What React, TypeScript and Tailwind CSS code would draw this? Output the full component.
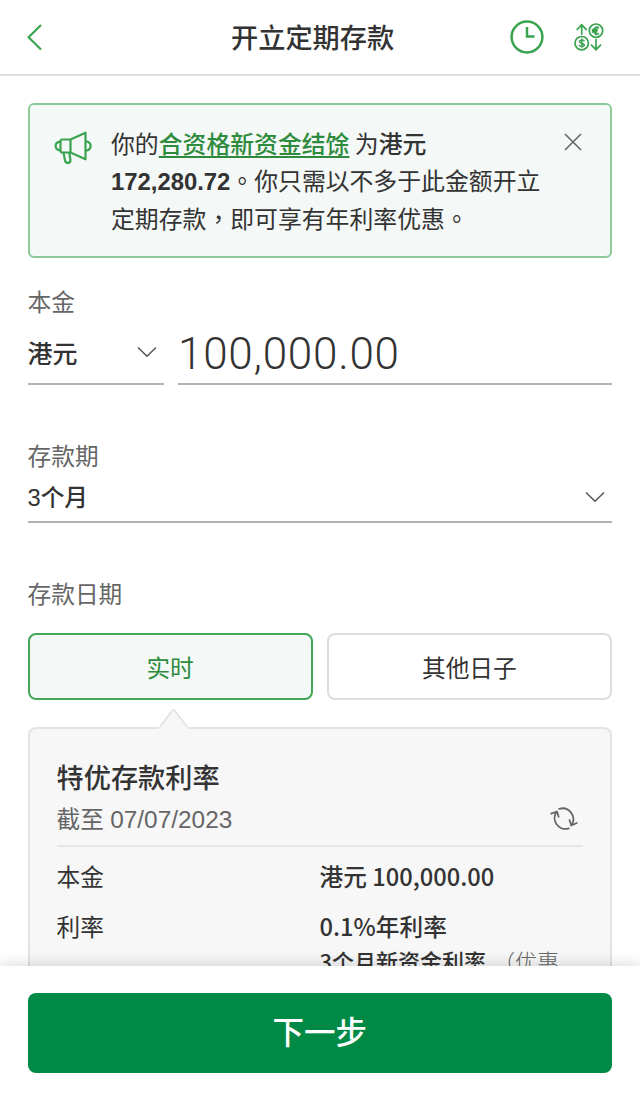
import { ReactNode } from "react";

const ChevronDown = () => {
    return (
        <svg className="h-3 w-5" viewBox="0 0 20 12" fill="none">
            <path
                d="M1 1.5 10 10.3 19 1.5"
                stroke="#555555"
                strokeWidth="1.5"
            />
        </svg>
    );
};

const Megaphone = () => {
    return (
        <svg
            className="mt-[6px] h-[34px] w-10 shrink-0"
            viewBox="0 0 40 34"
            fill="none"
            stroke="#3aa34f"
            strokeWidth="2.2"
            strokeLinejoin="round"
        >
            <path d="M9.5 9.5H17.5V22.5H9.5Q7.5 22.5 7.5 20.5V11.5Q7.5 9.5 9.5 9.5Z" />
            <path d="M17.5 9.5 32.5 2.7V29.3L17.5 22.5" />
            <path d="M7.5 11.7C1 12.2 1 19.8 7.5 20.3" />
            <path d="M32.5 11.4C39.3 11.8 39.3 20.4 32.5 20.8" />
            <path d="M10.5 22.5 12 30.4A2.6 2.6 0 0 0 17.4 29.8L16.2 22.5" />
        </svg>
    );
};

const Clock = () => {
    return (
        <svg
            className="h-9 w-9"
            viewBox="0 0 36 36"
            fill="none"
            stroke="#3aa34f"
            strokeWidth="2.5"
        >
            <circle cx="18" cy="18" r="15.4" />
            <path d="M18 8V17.5H25.5" />
        </svg>
    );
};

const Exchange = () => {
    return (
        <svg
            className="h-8 w-8"
            viewBox="0 0 32 32"
            fill="none"
            stroke="#3aa34f"
            strokeWidth="1.7"
        >
            <path d="M8.7 13.8V4M3.7 8.8 8.7 3.8 13.7 8.8" />
            <path d="M23 18V28.5M18 23.7 23 28.7 28 23.7" />
            <circle cx="23" cy="9.7" r="6.7" />
            <path
                d="M26 6.9C23.2 5.3 21.2 6.7 21.2 9.7S23.2 14.1 26 12.5M18.8 8.8H24.8M18.8 10.7H24.4"
                strokeWidth="1.9"
            />
            <circle cx="8.7" cy="22.2" r="6.7" />
            <path
                d="M11.4 20.2C11 18.8 6.4 18.6 6.4 20.6S11.3 21.9 11.3 23.9 6.4 25.7 6 23.8M8.8 17.6V26.8"
                strokeWidth="1.5"
            />
        </svg>
    );
};

const Refresh = () => {
    return (
        <svg
            className="h-[26px] w-7"
            viewBox="0 0 28 26"
            fill="none"
            stroke="#666666"
            strokeWidth="1.8"
            strokeLinecap="round"
            strokeLinejoin="round"
        >
            <path d="M9.2 2.9A10.8 10.8 0 0 1 21.6 19" />
            <path d="M18.8 22.3A10.8 10.8 0 0 1 6.6 5.8" />
            <path d="M1.2 7.6 7 5.6 8.6 10.8" />
            <path d="M26.8 17 21.3 19.4 19.5 14" />
        </svg>
    );
};

const Row = ({ label, children }: { label: string; children: ReactNode }) => {
    return (
        <div className="flex h-[49.5px] whitespace-nowrap leading-9">
            <div className="w-[263px]">{label}</div>
            <div className="font-medium">{children}</div>
        </div>
    );
};

const App = () => {
    return (
        <div className="flex h-[1100px] w-[640px] flex-col overflow-hidden bg-white font-['Noto_Sans_CJK_TC',sans-serif] text-[23.7px] text-[#333333]">
            <header className="flex h-[75.5px] shrink-0 items-center border-b-2 border-[#dddddd] pl-[26px] pr-[35px]">
                <svg
                    className="h-7 w-4"
                    viewBox="0 0 16 28"
                    fill="none"
                    stroke="#3aa34f"
                    strokeWidth="2.2"
                >
                    <path d="M15 2 2.6 14.2 15 26.5" />
                </svg>
                <h1 className="ml-[189px] w-[166px] whitespace-nowrap text-[27.2px] font-medium">
                    开立定期存款
                </h1>
                <div className="ml-auto flex items-center gap-7">
                    <Clock />
                    <Exchange />
                </div>
            </header>

            <main className="min-h-0 flex-1 overflow-hidden pl-[27.5px] pr-7 pt-[27px]">
                <div className="flex h-[155px] rounded-md border-2 border-[#8ccb98] bg-[#f4f8f6] pl-[23.5px] pt-[19px]">
                    <Megaphone />
                    <div className="ml-[18px] w-[440px] whitespace-nowrap text-[23.85px] leading-[37.5px]">
                        <p className="h-[37.5px]">
                            你的
                            <span className="font-medium text-[#2e8b3d] underline decoration-2 underline-offset-[3px]">
                                合资格新资金结馀
                            </span>{" "}
                            为<span className="font-medium">港元</span>
                        </p>
                        <p className="h-[37.5px]">
                            <span className="font-['Liberation_Sans',sans-serif] font-bold">
                                172,280.72
                            </span>
                            。你只需以不多于此金额开立
                        </p>
                        <p className="h-[37.5px]">
                            定期存款，即可享有年利率优惠。
                        </p>
                    </div>
                    <svg
                        className="ml-[13px] mt-[9px] h-[18px] w-[18px]"
                        viewBox="0 0 18 18"
                        stroke="#666666"
                        strokeWidth="1.6"
                    >
                        <path d="M1 1 17 17M17 1 1 17" />
                    </svg>
                </div>

                <div className="mt-[25px] h-9 leading-9 text-[#666666]">
                    本金
                </div>
                <div className="mt-1 flex h-[62px] gap-[14px]">
                    <div className="flex w-[136.5px] items-center justify-between border-b-2 border-[#b3b3b3] pb-0.5 pr-[7px]">
                        <span className="mt-[2px] text-[25px] font-medium">
                            港元
                        </span>
                        <ChevronDown />
                    </div>
                    <div className="flex-1 border-b-2 border-[#b3b3b3] font-['Roboto',sans-serif] text-[44px] font-light leading-[62px] tracking-[0.75px]">
                        100,000.00
                    </div>
                </div>

                <div className="mt-[52px] h-9 leading-9 text-[#666666]">
                    存款期
                </div>
                <div className="mt-[3px] flex h-[47px] items-center justify-between border-b-2 border-[#b3b3b3] pb-[3px] pr-[7px]">
                    <span className="mt-[4px] font-['Liberation_Sans','Noto_Sans_CJK_TC',sans-serif] font-medium">
                        3个月
                    </span>
                    <ChevronDown />
                </div>

                <div className="mt-[52px] h-9 leading-9 text-[#666666]">
                    存款日期
                </div>
                <div className="mt-[22px] flex h-[67px] gap-[14px]">
                    <div className="flex flex-1 items-center justify-center rounded-lg border-2 border-[#45a657] bg-[#f4f8f6] pt-[3px] text-[#2e8b3d]">
                        实时
                    </div>
                    <div className="flex flex-1 items-center justify-center rounded-lg border-2 border-[#dddddd] pt-[3px]">
                        其他日子
                    </div>
                </div>

                <div className="relative mt-[27px] h-[300px] rounded-lg border-2 border-[#e3e3e3] bg-[#f7f7f7] px-[27px] pt-[27px]">
                    <svg
                        className="absolute -top-[21px] left-[128px] h-[22px] w-8"
                        viewBox="0 0 32 22"
                        fill="#f7f7f7"
                    >
                        <path
                            d="M1 20 14 3Q15.5 1 17 3L30 20"
                            stroke="#e3e3e3"
                            strokeWidth="1.8"
                        />
                        <path d="M1.5 19H29.5L31 22H0Z" />
                    </svg>
                    <h2 className="h-10 text-[27.2px] font-medium leading-10">
                        特优存款利率
                    </h2>
                    <div className="flex h-[51px] items-start justify-between border-b-2 border-[#e6e6e6] pr-[5px] text-[#666666]">
                        <span className="mt-[4px] leading-9">
                            截至{" "}
                            <span className="ml-px font-['Liberation_Sans',sans-serif] text-[24.4px]">
                                07/07/2023
                            </span>
                        </span>
                        <div className="mt-[10px]">
                            <Refresh />
                        </div>
                    </div>
                    <div className="pt-[11.5px]">
                        <Row label="本金">港元 100,000.00</Row>
                        <Row label="利率">
                            0.1%年利率
                            <div className="-mt-[2px] text-[22px]">
                                3个月新资金利率
                                <span className="ml-[2px] font-light text-[#666666]">
                                    {" "}
                                    （优惠
                                </span>
                            </div>
                        </Row>
                    </div>
                </div>
            </main>

            <footer className="z-10 h-[134.5px] shrink-0 bg-white pl-[27.5px] pr-7 pt-[27px] shadow-[0_-2px_14px_rgba(0,0,0,0.14)]">
                <button className="flex h-20 w-full items-center justify-center rounded-lg bg-[#008a45] pb-[3px] text-[31.5px] font-medium text-white">
                    下一步
                </button>
            </footer>
        </div>
    );
};

export default App;
